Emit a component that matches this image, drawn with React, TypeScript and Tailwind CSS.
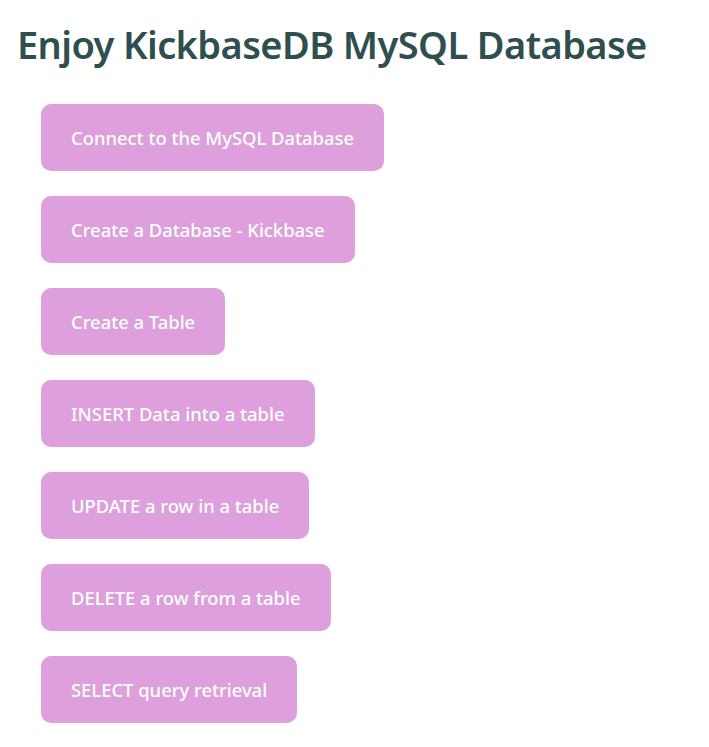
export default function App() {
  const items = [
    "Connect to the MySQL Database",
    "Create a Database - Kickbase",
    "Create a Table",
    "INSERT Data into a table",
    "UPDATE a row in a table",
    "DELETE a row from a table",
    "SELECT query retrieval",
  ];
  return (
    <div className="bg-white min-h-[747px] w-[709px]" style={{ fontFamily: '"Noto Sans", sans-serif' }}>
      <h1 className="pl-[17px] pt-[20px] text-[38px] leading-[48px] font-semibold text-[#2F4F4F] tracking-[-0.6px]">
        Enjoy KickbaseDB MySQL Database
      </h1>
      <div className="flex flex-col items-start gap-[25px] pl-[41px] mt-[36px]">
        {items.map((t) => (
          <button
            key={t}
            className="h-[67px] px-[30px] rounded-[10px] bg-[#DDA0DD] text-white text-[18.4px] font-medium flex items-center"
          >
            {t}
          </button>
        ))}
      </div>
    </div>
  );
}
